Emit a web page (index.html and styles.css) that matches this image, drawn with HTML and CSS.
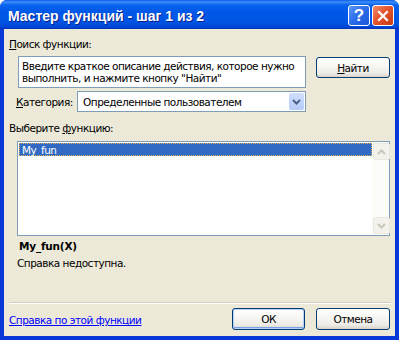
FILE: index.html
```html
<!DOCTYPE html>
<html>
<head>
    <title>Мастер функций - шаг 1 из 2</title>
    <link rel="stylesheet" href="styles.css">
</head>
<body>
    <div class="window">
        <div class="titlebar">
            <span class="title">Мастер функций - шаг 1 из 2</span>
            <div class="title-buttons">
                <div class="tbtn help">?</div>
                <div class="tbtn close">
                    <svg width="12" height="12" viewBox="0 0 12 12">
                        <path d="M2 2 L10 10 M10 2 L2 10" stroke="#fff" stroke-width="2.2" stroke-linecap="square"/>
                    </svg>
                </div>
            </div>
        </div>

        <div class="content">
            <div class="label"><u>П</u>оиск функции:</div>
            <div class="search-row">
                <div class="textbox">Введите краткое описание действия, которое нужно выполнить, и нажмите кнопку "Найти"</div>
                <button class="btn find"><u>Н</u>айти</button>
            </div>
            <div class="category-row">
                <span class="cat-label"><u>К</u>атегория:</span>
                <div class="combo">
                    <span class="combo-text">Определенные пользователем</span>
                    <div class="combo-btn">
                        <svg width="9" height="6" viewBox="0 0 9 6">
                            <path d="M1 1 L4.5 4.5 L8 1" fill="none" stroke="#4D6185" stroke-width="2"/>
                        </svg>
                    </div>
                </div>
            </div>

            <div class="label pick">Выберите <u>ф</u>ункцию:</div>
            <div class="listbox">
                <div class="items">
                    <div class="item selected">My_fun</div>
                </div>
                <div class="scrollbar">
                    <div class="sbtn">
                        <svg width="9" height="6" viewBox="0 0 9 6">
                            <path d="M1 5 L4.5 1.5 L8 5" fill="none" stroke="#C9C7BA" stroke-width="2"/>
                        </svg>
                    </div>
                    <div class="sbtn">
                        <svg width="9" height="6" viewBox="0 0 9 6">
                            <path d="M1 1 L4.5 4.5 L8 1" fill="none" stroke="#C9C7BA" stroke-width="2"/>
                        </svg>
                    </div>
                </div>
            </div>

            <div class="func-name">My_fun(X)</div>
            <div class="func-help">Справка недоступна.</div>

            <div class="separator"></div>
            <div class="footer">
                <a class="help-link" href="#">Справка по этой функции</a>
                <div class="footer-buttons">
                    <button class="btn default">ОК</button>
                    <button class="btn cancel">Отмена</button>
                </div>
            </div>
        </div>
    </div>
</body>
</html>
```

FILE: styles.css
```css
:root {
    --dialog-bg: #ECE9D8;
    --frame: #0838D8;
    --field-border: #7F9DB9;
    --button-border: #003C74;
    --select-bg: #316AC5;
}

body {
    margin: 0;
    background: #ffffff;
    font-family: "DejaVu Sans", sans-serif;
    font-size: 10.5px;
    letter-spacing: -0.5px;
    color: #000000;
}

.window {
    width: 399px;
    height: 340px;
    box-sizing: border-box;
    display: flex;
    flex-direction: column;
    background: var(--frame);
    border-radius: 7px 7px 0 0;
    overflow: hidden;
}

.titlebar {
    height: 29px;
    flex: none;
    display: flex;
    align-items: center;
    justify-content: space-between;
    padding: 0 5px 0 8px;
    background: linear-gradient(to bottom, #0A5DE8 0, #3D8DF7 2px, #0A62F0 5px, #0058E8 12px, #0054E3 22px, #0047D6 27px, #0030B8 29px);
}

.title {
    color: #ffffff;
    font-family: "Liberation Sans", sans-serif;
    font-weight: bold;
    font-size: 14px;
    letter-spacing: 0;
    text-shadow: 1px 1px 0 #0A1E8C;
    margin-top: 2px;
}

.title-buttons {
    display: flex;
    gap: 2px;
    margin-top: 2px;
}

.tbtn {
    width: 20px;
    height: 19px;
    border: 1px solid #ffffff;
    border-radius: 3px;
    display: flex;
    align-items: center;
    justify-content: center;
    color: #ffffff;
}

.help {
    background: linear-gradient(135deg, #5C95F5 0%, #2A6CEA 50%, #1C55D8 100%);
    font-family: "Liberation Sans", sans-serif;
    font-weight: bold;
    font-size: 17px;
    letter-spacing: 0;
}

.close {
    background: linear-gradient(135deg, #F28C6E 0%, #E2552D 45%, #C83A14 100%);
}

.content {
    flex: 1;
    margin: 0 4px 4px 4px;
    background: var(--dialog-bg);
    padding: 0 5px;
    display: flex;
    flex-direction: column;
}

.label {
    margin-top: 9px;
    line-height: 13px;
}

.search-row {
    display: flex;
    align-items: flex-start;
    margin-top: 5px;
    padding-left: 9px;
}

.textbox {
    width: 288px;
    height: 32px;
    box-sizing: border-box;
    border: 1px solid var(--field-border);
    background: #ffffff;
    padding: 3px 2px 0 3px;
    line-height: 12px;
}

.btn {
    font-family: "DejaVu Sans", sans-serif;
    font-size: 10.5px;
    letter-spacing: -0.5px;
    color: #000000;
    height: 22px;
    border: 1px solid var(--button-border);
    border-radius: 3px;
    background: linear-gradient(to bottom, #FFFFFF 0%, #F7F7F3 40%, #ECEBE6 80%, #D8D3C8 100%);
    padding: 0;
}

.find {
    width: 74px;
    height: 21px;
    margin-left: 10px;
    margin-top: 1px;
}

.category-row {
    display: flex;
    align-items: center;
    margin-top: 3px;
    padding-left: 7px;
}

.cat-label {
    width: 61px;
}

.combo {
    width: 229px;
    height: 21px;
    box-sizing: border-box;
    border: 1px solid var(--field-border);
    background: #ffffff;
    display: flex;
    align-items: center;
    justify-content: space-between;
    padding-left: 5px;
}

.combo-btn {
    width: 15px;
    height: 17px;
    margin-right: 1px;
    border-radius: 2px;
    background: linear-gradient(to bottom, #D0DEFD, #B5CBF9);
    display: flex;
    align-items: center;
    justify-content: center;
}

.pick {
    margin-top: 10px;
}

.listbox {
    margin: 6px 0 0 8px;
    width: 373px;
    height: 95px;
    box-sizing: border-box;
    border: 1px solid var(--field-border);
    background: #ffffff;
    display: flex;
}

.items {
    flex: 1;
    padding: 1px 0 0 1px;
}

.item {
    height: 13px;
    line-height: 12px;
    padding-left: 2px;
    box-sizing: border-box;
}

.selected {
    background: var(--select-bg);
    color: #ffffff;
    border: 1px dotted #E8B050;
}

.scrollbar {
    width: 17px;
    background: #FCFCF8;
    display: flex;
    flex-direction: column;
    justify-content: space-between;
    padding: 1px 0;
}

.sbtn {
    width: 15px;
    height: 15px;
    margin-left: 1px;
    border: 1px solid #E9E7DE;
    border-radius: 2px;
    background: #F3F2EC;
    display: flex;
    align-items: center;
    justify-content: center;
}

.func-name {
    margin: 4px 0 0 10px;
    font-weight: bold;
    letter-spacing: -0.2px;
    line-height: 13px;
}

.func-help {
    margin: 4px 0 0 8px;
    line-height: 13px;
}

.separator {
    margin-top: 32px;
    width: 382px;
    border-top: 1px solid #D0CEBF;
    border-bottom: 1px solid #ffffff;
}

.footer {
    display: flex;
    align-items: center;
    justify-content: space-between;
    margin-top: 4px;
}

.help-link {
    color: #0000FF;
    margin-top: 2px;
}

.footer-buttons {
    display: flex;
    gap: 11px;
}

.footer-buttons .btn {
    width: 73px;
}

.footer-buttons .cancel {
    width: 74px;
}

.default {
    box-shadow: inset 0 0 0 1px #B9D1F8, inset 0 -1px 0 1px #7E9FE8;
}
```
